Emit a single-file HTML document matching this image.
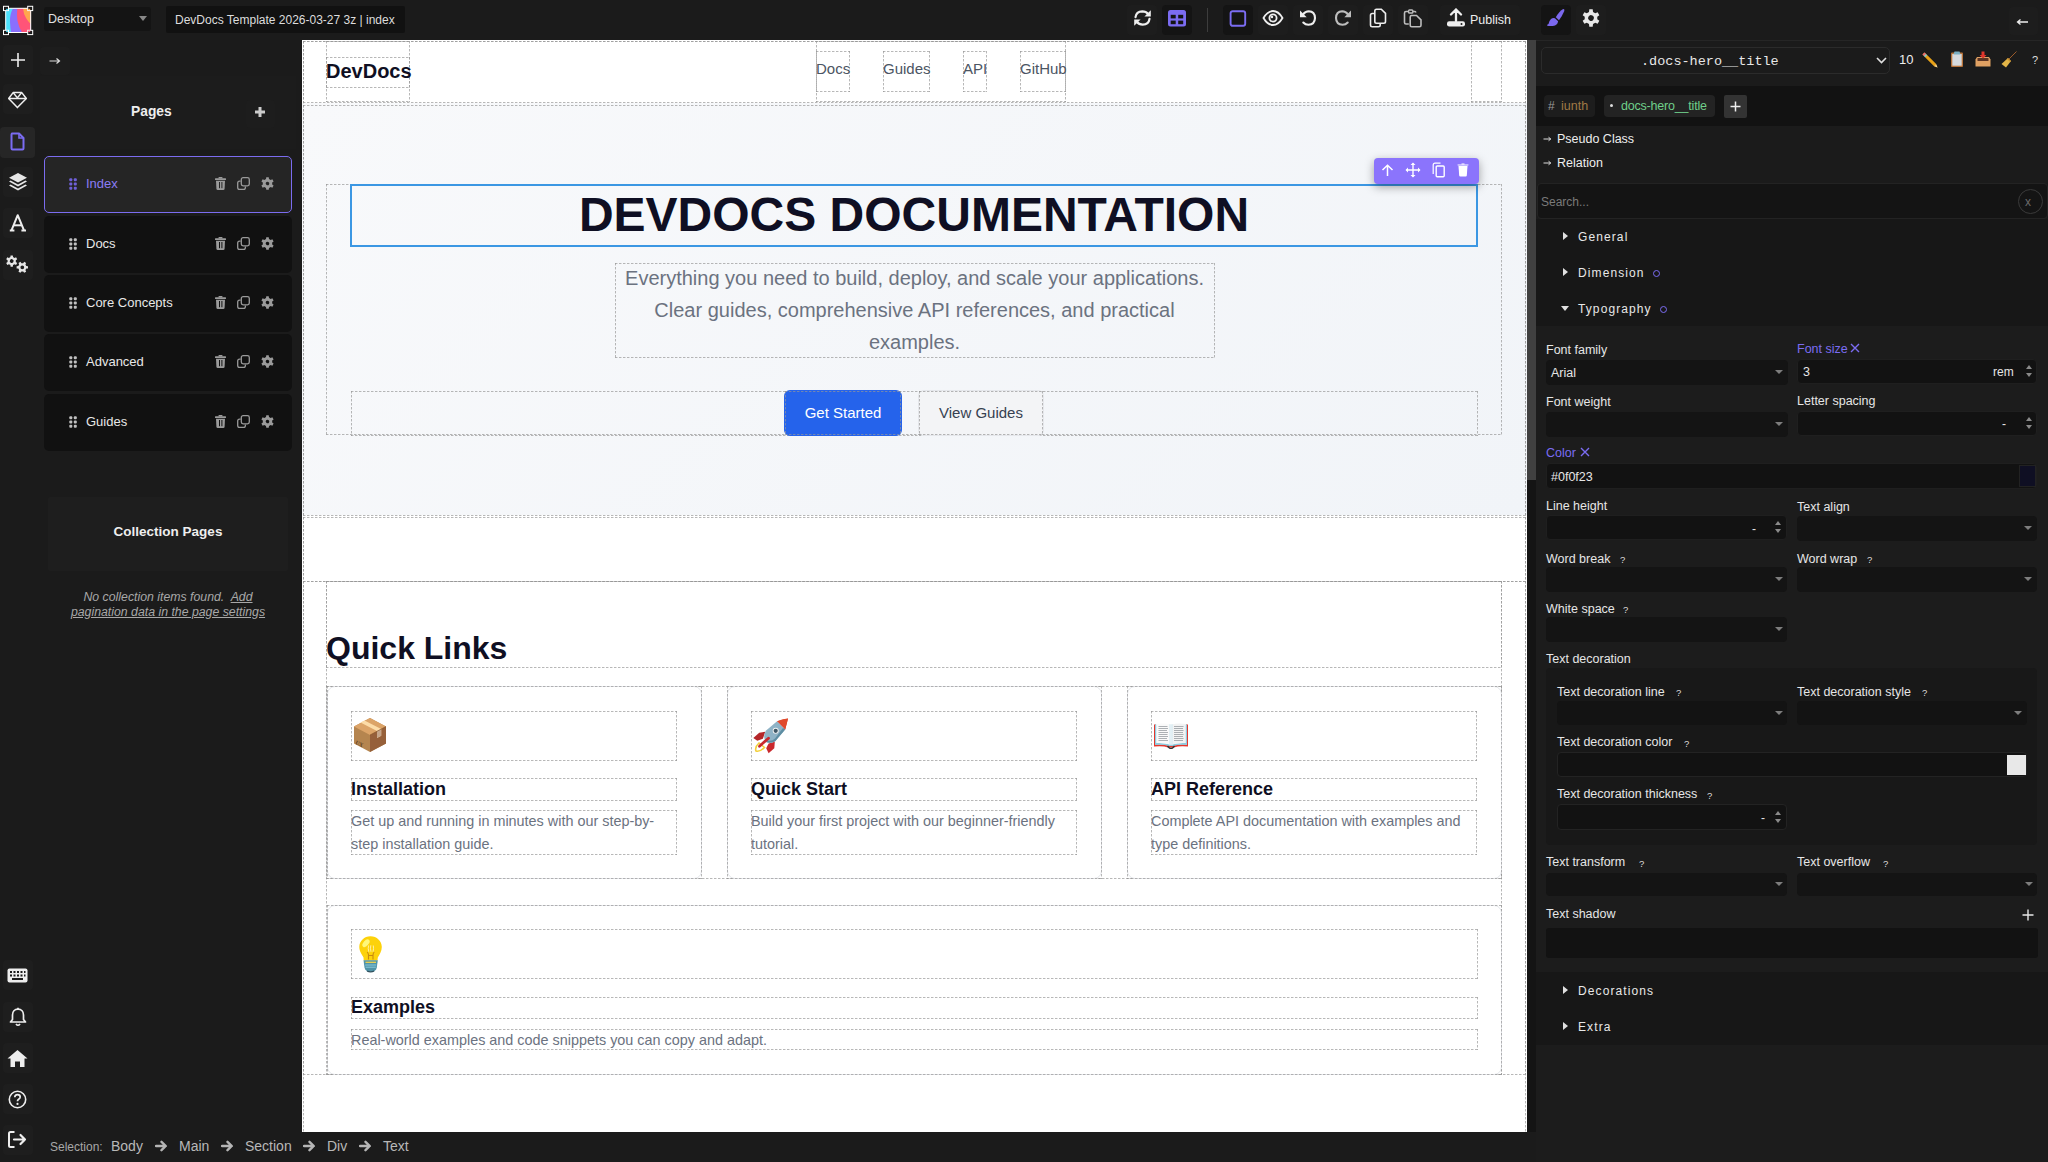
<!DOCTYPE html>
<html><head><meta charset="utf-8">
<style>
*{box-sizing:border-box;margin:0;padding:0}
html,body{width:2048px;height:1162px;overflow:hidden;background:#1b1b1b;font-family:"Liberation Sans",sans-serif;color:#e6e6e6}
.a{position:absolute}
svg{display:block}
/* top bar */
#top{position:absolute;left:0;top:0;width:2048px;height:40px;background:#1b1b1b}
.tbtn{position:absolute;top:5px;width:30px;height:30px;border-radius:4px;background:#1e1e1e}
/* canvas */
#canvas{position:absolute;left:302px;top:40px;width:1225px;height:1092px;background:#fff;overflow:hidden;font-family:"Liberation Sans",sans-serif}
.t{position:absolute;white-space:nowrap}
.emo{position:absolute}
.d{position:absolute;--c:rgba(150,150,150,.68);--h:rgba(150,150,150,.3);
background-image:linear-gradient(90deg,var(--c) 2px,var(--h) 2px,var(--h) 3px,transparent 3px),linear-gradient(90deg,var(--c) 2px,var(--h) 2px,var(--h) 3px,transparent 3px),linear-gradient(180deg,var(--c) 2px,var(--h) 2px,var(--h) 3px,transparent 3px),linear-gradient(180deg,var(--c) 2px,var(--h) 2px,var(--h) 3px,transparent 3px);
background-size:4px 1px,4px 1px,1px 4px,1px 4px;background-position:0 0,0 100%,0 0,100% 0;background-repeat:repeat-x,repeat-x,repeat-y,repeat-y}
/* status */
#status{position:absolute;left:36px;top:1132px;width:1500px;height:30px;background:#1b1b1b}
</style></head>
<body>
<div id="top">
  <!-- logo -->
  <div class="a" style="left:0;top:0;width:40px;height:40px">
    <svg width="40" height="40" viewBox="0 0 40 40">
      <rect x="5.7" y="8.3" width="25" height="24.2" fill="#4de0fb"/>
      <path d="M13 8.3Q9.5 15 10 22Q10.3 28 11 32.5H30.7V8.3Z" fill="#8a6ffd"/>
      <path d="M17.3 8.3Q16.5 15 17.5 21Q19 28 22 32.5H30.7V8.3Z" fill="#ff5478"/>
      <path d="M23 8.3Q23.5 14 26 18Q28 21.5 30.7 24V8.3Z" fill="#ffa64d"/>
      <rect x="5.7" y="8.3" width="25" height="24.2" fill="none" stroke="#fff" stroke-width="1"/>
      <g fill="#1b1b1b" stroke="#fff" stroke-width="1"><rect x="3.5" y="6.3" width="5" height="4.3"/><rect x="27.7" y="6.3" width="5" height="4.3"/><rect x="3.5" y="30.3" width="5" height="4.3"/><rect x="27.7" y="30.3" width="5" height="4.3"/></g>
      <g fill="#4de0fb"><rect x="6.2" y="8.8" width="1.8" height="1.3"/><rect x="6.2" y="30.8" width="1.8" height="1.3"/></g>
      <g fill="#ffa64d"><rect x="28.2" y="8.8" width="2" height="1.3"/></g><g fill="#ff5478"><rect x="28.2" y="30.8" width="2" height="1.3"/></g>
    </svg>
  </div>
  <div class="a" style="left:44px;top:7px;width:107px;height:24px;background:#141414;border-radius:3px"></div>
  <div class="a" style="left:48px;top:12px;font-size:12.5px;color:#e0e0e0">Desktop</div>
  <div class="a" style="left:139px;top:16px;width:0;height:0;border-left:4px solid transparent;border-right:4px solid transparent;border-top:5px solid #888"></div>
  <div class="a" style="left:166px;top:6px;width:239px;height:27px;background:#111;border-radius:2px"></div>
  <div class="a" style="left:175px;top:13px;font-size:12px;color:#ddd">DevDocs Template 2026-03-27 3z | index</div>

  <div class="a" style="left:1127px;top:5px;width:30px;height:30px;background:#1d1d1d;border-radius:4px"></div>
  <svg class="a" style="left:1133px;top:9px" width="19" height="18" viewBox="0 0 19 18"><g fill="none" stroke="#eee" stroke-width="2.2" stroke-linecap="round"><path d="M2.5 8.2Q3.2 2.5 9.3 2.3Q13 2.3 15.3 5.2"/><path d="M16.5 9.8Q15.8 15.5 9.7 15.7Q6 15.7 3.7 12.8"/></g><path d="M17.8 1.2V7.6H11.4Z" fill="#eee"/><path d="M1.2 16.8V10.4H7.6Z" fill="#eee"/></svg>
  <div class="a" style="left:1162px;top:5px;width:30px;height:30px;background:#141414;border-radius:4px"></div>
  <svg class="a" style="left:1168px;top:10px" width="18" height="17" viewBox="0 0 18 17"><rect x="0" y="0" width="18" height="16.5" rx="2.5" fill="#7b6cf2"/><g fill="#141414"><rect x="2.7" y="4.8" width="5" height="3.6"/><rect x="10.2" y="4.8" width="5" height="3.6"/><rect x="2.7" y="10.6" width="5" height="3.6"/><rect x="10.2" y="10.6" width="5" height="3.6"/></g></svg>
  <div class="a" style="left:1207px;top:8px;width:1px;height:24px;background:#3d3d3d"></div>
  <div class="a" style="left:1223px;top:5px;width:30px;height:30px;background:#141414;border-radius:4px"></div>
  <svg class="a" style="left:1229px;top:10px" width="18" height="17" viewBox="0 0 18 17"><rect x="1.6" y="1.2" width="14.6" height="14.6" rx="2" fill="none" stroke="#7b6cf2" stroke-width="1.9"/></svg>
  <div class="a" style="left:1258px;top:5px;width:30px;height:30px;background:#1d1d1d;border-radius:4px"></div>
  <svg class="a" style="left:1262px;top:9px" width="22" height="18" viewBox="0 0 22 18"><path d="M1.5 9Q5.5 2 11 2Q16.5 2 20.5 9Q16.5 16 11 16Q5.5 16 1.5 9Z" fill="none" stroke="#eee" stroke-width="1.8"/><circle cx="11" cy="9" r="3.6" fill="none" stroke="#eee" stroke-width="1.8"/><circle cx="10" cy="8" r="1.2" fill="#eee"/></svg>
  <div class="a" style="left:1293px;top:5px;width:30px;height:30px;background:#1d1d1d;border-radius:4px"></div>
  <svg class="a" style="left:1299px;top:9px" width="18" height="18" viewBox="0 0 18 18"><path d="M4 5.5Q6.2 2.3 9.8 2.3Q15.8 2.5 16 9Q15.8 15.5 9.5 15.7Q6.3 15.7 4.3 13.5" fill="none" stroke="#eee" stroke-width="2.1" stroke-linecap="round"/><path d="M1 1.5V8.2H7.7Z" fill="#eee"/></svg>
  <div class="a" style="left:1328px;top:5px;width:30px;height:30px;background:#1d1d1d;border-radius:4px"></div>
  <svg class="a" style="left:1334px;top:9px" width="18" height="18" viewBox="0 0 18 18"><path d="M14 5.5Q11.8 2.3 8.2 2.3Q2.2 2.5 2 9Q2.2 15.5 8.5 15.7Q11.7 15.7 13.7 13.5" fill="none" stroke="#bdbdbd" stroke-width="2.1" stroke-linecap="round"/><path d="M17 1.5V8.2H10.3Z" fill="#bdbdbd"/></svg>
  <div class="a" style="left:1363px;top:5px;width:30px;height:30px;background:#1d1d1d;border-radius:4px"></div>
  <svg class="a" style="left:1369px;top:8px" width="18" height="20" viewBox="0 0 18 20"><path d="M7.5 1.2H12.3L16.5 5.4V13.5Q16.5 15.2 14.8 15.2H7.5Q5.8 15.2 5.8 13.5V2.9Q5.8 1.2 7.5 1.2Z" fill="none" stroke="#eee" stroke-width="1.6"/><path d="M5.8 5.5H3.2Q1.5 5.5 1.5 7.2V17.2Q1.5 18.8 3.2 18.8H9.5Q11.2 18.8 11.2 17.2V15.2" fill="none" stroke="#eee" stroke-width="1.6"/></svg>
  <div class="a" style="left:1398px;top:5px;width:30px;height:30px;background:#1d1d1d;border-radius:4px"></div>
  <svg class="a" style="left:1403px;top:8px" width="20" height="20" viewBox="0 0 20 20"><path d="M5.2 3.5H3Q1.5 3.5 1.5 5V14.5Q1.5 16 3 16H5.8" fill="none" stroke="#bdbdbd" stroke-width="1.6"/><path d="M9.5 3.5H11.5Q12.5 3.5 13 4.5" fill="none" stroke="#bdbdbd" stroke-width="1.6"/><rect x="5.6" y="2" width="4.2" height="3" rx=".8" fill="none" stroke="#bdbdbd" stroke-width="1.4"/><path d="M8 7.5H13.5L18 11.8V17.3Q18 18.8 16.5 18.8H8.7Q7.2 18.8 7.2 17.3V9Q7.2 7.5 8.7 7.5Z" fill="none" stroke="#bdbdbd" stroke-width="1.6"/></svg>
  <div class="a" style="left:1440px;top:5px;width:80px;height:30px;background:#1d1d1d;border-radius:4px"></div>
  <svg class="a" style="left:1446px;top:8px" width="20" height="20" viewBox="0 0 20 20"><path d="M10 1.5L15 6.5M10 1.5L5 6.5M10 1.5V13" fill="none" stroke="#eee" stroke-width="2.3" stroke-linecap="round"/><rect x="1" y="13.3" width="18" height="5.2" rx="2.2" fill="#eee"/><circle cx="15.5" cy="15.9" r="1" fill="#1b1b1b"/></svg>
  <div class="a" style="left:1470px;top:13px;font-size:12.5px;color:#eee;letter-spacing:0px">Publish</div>

  <div class="a" style="left:1541px;top:5px;width:30px;height:30px;background:#141414;border-radius:4px"></div>
  <svg class="a" style="left:1546px;top:8px" width="20" height="20" viewBox="0 0 20 20"><path d="M16.8 1.2Q18.8 0.6 18.3 3Q16 8.5 13 12.3L9.8 9.3Q13 3.5 16.8 1.2Z" fill="#7b68ee"/><path d="M8.9 10.2L12.1 13.2Q11.5 17.5 7 17.9Q3.5 18.2 1.2 17.8Q0.6 16.6 2.5 16Q3.3 12.5 5 11Q6.8 9.6 8.9 10.2Z" fill="#7b68ee"/></svg>
  <div class="a" style="left:1576px;top:5px;width:30px;height:30px;background:#1d1d1d;border-radius:4px"></div>
  <svg class="a" style="left:1582px;top:9px" width="18" height="18" viewBox="0 0 18 18"><path d="M15.08 6.99L17.64 7.31L17.64 10.69L15.08 11.01L13.78 13.26L14.78 15.63L11.85 17.33L10.30 15.27L7.70 15.27L6.15 17.33L3.22 15.63L4.22 13.26L2.92 11.01L0.36 10.69L0.36 7.31L2.92 6.99L4.22 4.74L3.22 2.37L6.15 0.67L7.70 2.73L10.30 2.73L11.85 0.67L14.78 2.37L13.78 4.74ZM11.80 9.00A2.8 2.8 0 1 0 6.20 9.00A2.8 2.8 0 1 0 11.80 9.00Z" fill="#e8e8e8" fill-rule="evenodd" transform="rotate(30 9 9)"/></svg>
  <div class="a" style="left:2009px;top:7px;width:29px;height:28px;background:#1d1d1d;border-radius:4px"></div>
  <svg class="a" style="left:2016px;top:18px" width="13" height="8" viewBox="0 0 13 8"><path d="M12 4H2M4.5 1.5L1.5 4L4.5 6.5" fill="none" stroke="#eee" stroke-width="1.3"/></svg>
  <div class="a" style="left:1536px;top:40px;width:512px;height:1px;background:#262626"></div>
</div>


<div id="lside">
  <div class="tbtn" style="left:3px;top:45px"></div>
  <svg class="a" style="left:9px;top:51px" width="18" height="18" viewBox="0 0 18 18"><path d="M9 2V16M2 9H16" stroke="#eee" stroke-width="1.6"/></svg>
  <div class="tbtn" style="left:3px;top:84px"></div>
  <svg class="a" style="left:8px;top:91px" width="20" height="18" viewBox="0 0 20 18"><g fill="none" stroke="#eee" stroke-width="1.5" stroke-linejoin="round"><path d="M5.1 1.6H13.8L18.3 7.5L9.4 16.6L0.7 7.5Z"/><path d="M0.7 7.5H18.3"/><path d="M5.3 1.8L9.4 6.9L13.5 1.8"/></g></svg>
  <div class="a" style="left:0;top:127px;width:35px;height:31px;background:#262626;border-radius:4px"></div>
  <svg class="a" style="left:10px;top:132px" width="15" height="19" viewBox="0 0 15 19"><path d="M2 1.5H9L13.5 6V16.5Q13.5 17.5 12.5 17.5H2.5Q1.5 17.5 1.5 16.5V2.5Q1.5 1.5 2.5 1.5Z" fill="none" stroke="#7b6cf2" stroke-width="2" stroke-linejoin="round"/><path d="M9 1.5V6H13.5" fill="none" stroke="#7b6cf2" stroke-width="1.6"/></svg>
  <div class="tbtn" style="left:3px;top:167px"></div>
  <svg class="a" style="left:8px;top:172px" width="20" height="20" viewBox="0 0 20 20"><g fill="#e6e6e6"><path d="M10 1L19 5.8L10 10.6L1 5.8Z"/><path d="M2.6 8.6L10 12.6L17.4 8.6L19 9.6L10 14.5L1 9.6Z"/><path d="M2.6 12.5L10 16.5L17.4 12.5L19 13.5L10 18.4L1 13.5Z"/></g></svg>
  <div class="tbtn" style="left:3px;top:208px"></div>
  <svg class="a" style="left:8px;top:213px" width="20" height="20" viewBox="0 0 20 20"><g fill="none" stroke="#eee" stroke-width="2" stroke-linejoin="round"><path d="M3.6 17.2L9.7 2.2L15.9 17.2"/><path d="M5.7 12.3H13.8"/><path d="M1.8 17.5H6.4M13.4 17.5H18"/></g></svg>
  <div class="tbtn" style="left:3px;top:250px"></div>
  <svg class="a" style="left:5px;top:255px" width="26" height="20" viewBox="0 0 26 20"><path d="M10.19 4.88L11.89 5.08L11.89 7.32L10.19 7.52L9.34 8.99L10.01 10.57L8.08 11.69L7.05 10.31L5.35 10.31L4.32 11.69L2.39 10.57L3.06 8.99L2.21 7.52L0.51 7.32L0.51 5.08L2.21 4.88L3.06 3.41L2.39 1.83L4.32 0.71L5.35 2.09L7.05 2.09L8.08 0.71L10.01 1.83L9.34 3.41ZM8.10 6.20A1.9 1.9 0 1 0 4.30 6.20A1.9 1.9 0 1 0 8.10 6.20Z" fill="#e6e6e6" fill-rule="evenodd" transform="translate(0.5 -0.1) rotate(30 6.2 6.2)"/><path d="M10.19 4.88L11.89 5.08L11.89 7.32L10.19 7.52L9.34 8.99L10.01 10.57L8.08 11.69L7.05 10.31L5.35 10.31L4.32 11.69L2.39 10.57L3.06 8.99L2.21 7.52L0.51 7.32L0.51 5.08L2.21 4.88L3.06 3.41L2.39 1.83L4.32 0.71L5.35 2.09L7.05 2.09L8.08 0.71L10.01 1.83L9.34 3.41ZM8.10 6.20A1.9 1.9 0 1 0 4.30 6.20A1.9 1.9 0 1 0 8.10 6.20Z" fill="#e6e6e6" fill-rule="evenodd" transform="translate(11.1 6.1) rotate(0 6.2 6.2)"/></svg>

  <div class="tbtn" style="left:3px;top:960px"></div>
  <svg class="a" style="left:7px;top:968px" width="21" height="15" viewBox="0 0 21 15"><rect x="0.5" y="0.5" width="20" height="14" rx="2" fill="#eee"/><g fill="#1b1b1b"><rect x="3" y="3" width="2" height="2"/><rect x="6.5" y="3" width="2" height="2"/><rect x="10" y="3" width="2" height="2"/><rect x="13.5" y="3" width="2" height="2"/><rect x="17" y="3" width="1.5" height="2"/><rect x="3" y="6.5" width="2" height="2"/><rect x="6.5" y="6.5" width="2" height="2"/><rect x="10" y="6.5" width="2" height="2"/><rect x="13.5" y="6.5" width="2" height="2"/><rect x="17" y="6.5" width="1.5" height="2"/><rect x="5" y="10" width="11" height="2"/></g></svg>
  <div class="tbtn" style="left:3px;top:1002px"></div>
  <svg class="a" style="left:9px;top:1007px" width="18" height="20" viewBox="0 0 18 20"><path d="M9 2.2C5.6 2.2 3.5 4.8 3.5 8V12.5L1.5 15H16.5L14.5 12.5V8C14.5 4.8 12.4 2.2 9 2.2Z" fill="none" stroke="#eee" stroke-width="1.7" stroke-linejoin="round"/><path d="M9 0.8V2.4" stroke="#eee" stroke-width="1.6"/><path d="M7 17Q9 19.5 11 17" fill="none" stroke="#eee" stroke-width="1.7"/></svg>
  <div class="tbtn" style="left:3px;top:1043px"></div>
  <svg class="a" style="left:7px;top:1049px" width="21" height="19" viewBox="0 0 21 19"><path d="M10.5 1L20.5 9.5H17.5V18H13V12.5H8V18H3.5V9.5H0.5Z" fill="#eee"/></svg>
  <div class="tbtn" style="left:3px;top:1084px"></div>
  <svg class="a" style="left:8px;top:1090px" width="19" height="19" viewBox="0 0 19 19"><circle cx="9.5" cy="9.5" r="8.2" fill="none" stroke="#eee" stroke-width="1.6"/><path d="M6.8 7.3Q6.8 4.6 9.5 4.6Q12.2 4.6 12.2 7Q12.2 8.6 10.4 9.4Q9.5 9.9 9.5 11.2" fill="none" stroke="#eee" stroke-width="1.7"/><circle cx="9.5" cy="13.9" r="1.1" fill="#eee"/></svg>
  <div class="tbtn" style="left:3px;top:1125px"></div>
  <svg class="a" style="left:7px;top:1130px" width="21" height="19" viewBox="0 0 21 19"><path d="M7.5 2H3.5Q2 2 2 3.5V15.5Q2 17 3.5 17H7.5" fill="none" stroke="#eee" stroke-width="2"/><path d="M7 9.5H18M13.5 5L18 9.5L13.5 14" fill="none" stroke="#eee" stroke-width="2.2" stroke-linecap="round" stroke-linejoin="round"/></svg>
</div>

<div id="pages">
  <div class="a" style="left:40px;top:47px;width:30px;height:28px;background:#1d1d1d;border-radius:4px"></div>
  <svg class="a" style="left:49px;top:57px" width="12" height="8" viewBox="0 0 12 8"><path d="M0.5 4H10M7.5 1.5L10.5 4L7.5 6.5" fill="none" stroke="#ddd" stroke-width="1.2"/></svg>
  <div class="a" style="left:40px;top:76px;width:256px;height:73px;background:#1c1c1c"></div>
  <div class="a" style="left:131px;top:104px;font-size:13.8px;font-weight:bold;color:#eee">Pages</div>
  <div class="a" style="left:246px;top:100px;width:29px;height:28px;border-radius:4px;background:#1d1d1d"></div>
  <svg class="a" style="left:254px;top:106px" width="12" height="12" viewBox="0 0 12 12"><path d="M6 1V11M1 6H11" stroke="#ccc" stroke-width="3"/></svg>

  <div class="a" style="left:44px;top:156px;width:248px;height:57px;background:#252525;border-radius:5px;border:1.5px solid #7b6cf0;"></div>
  <svg class="a" style="left:69px;top:178px" width="8" height="12" viewBox="0 0 8 12"><g fill="#6f60d8"><rect x="0.3" y="0.2" width="3" height="3" rx="1"/><rect x="4.8" y="0.2" width="3" height="3" rx="1"/><rect x="0.3" y="4.5" width="3" height="3" rx="1"/><rect x="4.8" y="4.5" width="3" height="3" rx="1"/><rect x="0.3" y="8.8" width="3" height="3" rx="1"/><rect x="4.8" y="8.8" width="3" height="3" rx="1"/></g></svg>
  <div class="a" style="left:86px;top:176px;font-size:13px;color:#8a7cf5;white-space:nowrap">Index</div>
  <svg class="a" style="left:215px;top:177px" width="11" height="13" viewBox="0 0 11 13"><g fill="#9a9a9a"><rect x="0" y="1.2" width="11" height="1.8" rx=".5"/><rect x="3.5" y="0" width="4" height="1.6" rx=".6"/><path d="M1 3.8H10L9.6 11.8Q9.5 13 8.3 13H2.7Q1.5 13 1.4 11.8Z"/></g><g fill="#252525"><rect x="4" y="5" width="1" height="6.2"/><rect x="6.4" y="5" width="1" height="6.2"/></g></svg>
  <svg class="a" style="left:237px;top:177px" width="13" height="13" viewBox="0 0 13 13"><g fill="none" stroke="#9a9a9a" stroke-width="1.3"><rect x="4.3" y="0.7" width="8" height="8.2" rx="1.8"/><path d="M3.6 4.2H2.5Q0.7 4.2 0.7 6V10.4Q0.7 12.3 2.5 12.3H6.5Q8.4 12.3 8.4 10.4V9.5"/></g></svg>
  <svg class="a" style="left:261px;top:177px" width="13" height="13" viewBox="0 0 12.5 12.5"><path d="M10.62 4.81L12.33 5.06L12.33 7.44L10.62 7.69L9.68 9.31L10.33 10.92L8.26 12.12L7.18 10.75L5.32 10.75L4.24 12.12L2.17 10.92L2.82 9.31L1.88 7.69L0.17 7.44L0.17 5.06L1.88 4.81L2.82 3.19L2.17 1.58L4.24 0.38L5.32 1.75L7.18 1.75L8.26 0.38L10.33 1.58L9.68 3.19ZM7.95 6.25A1.7 1.7 0 1 0 4.55 6.25A1.7 1.7 0 1 0 7.95 6.25Z" fill="#9a9a9a" fill-rule="evenodd" transform="rotate(30 6.25 6.25)"/></svg>
  <div class="a" style="left:44px;top:216px;width:248px;height:57px;background:#111111;border-radius:5px;"></div>
  <svg class="a" style="left:69px;top:238px" width="8" height="12" viewBox="0 0 8 12"><g fill="#c0c0c0"><rect x="0.3" y="0.2" width="3" height="3" rx="1"/><rect x="4.8" y="0.2" width="3" height="3" rx="1"/><rect x="0.3" y="4.5" width="3" height="3" rx="1"/><rect x="4.8" y="4.5" width="3" height="3" rx="1"/><rect x="0.3" y="8.8" width="3" height="3" rx="1"/><rect x="4.8" y="8.8" width="3" height="3" rx="1"/></g></svg>
  <div class="a" style="left:86px;top:236px;font-size:13px;color:#e8e8e8;white-space:nowrap">Docs</div>
  <svg class="a" style="left:215px;top:237px" width="11" height="13" viewBox="0 0 11 13"><g fill="#9a9a9a"><rect x="0" y="1.2" width="11" height="1.8" rx=".5"/><rect x="3.5" y="0" width="4" height="1.6" rx=".6"/><path d="M1 3.8H10L9.6 11.8Q9.5 13 8.3 13H2.7Q1.5 13 1.4 11.8Z"/></g><g fill="#111111"><rect x="4" y="5" width="1" height="6.2"/><rect x="6.4" y="5" width="1" height="6.2"/></g></svg>
  <svg class="a" style="left:237px;top:237px" width="13" height="13" viewBox="0 0 13 13"><g fill="none" stroke="#9a9a9a" stroke-width="1.3"><rect x="4.3" y="0.7" width="8" height="8.2" rx="1.8"/><path d="M3.6 4.2H2.5Q0.7 4.2 0.7 6V10.4Q0.7 12.3 2.5 12.3H6.5Q8.4 12.3 8.4 10.4V9.5"/></g></svg>
  <svg class="a" style="left:261px;top:237px" width="13" height="13" viewBox="0 0 12.5 12.5"><path d="M10.62 4.81L12.33 5.06L12.33 7.44L10.62 7.69L9.68 9.31L10.33 10.92L8.26 12.12L7.18 10.75L5.32 10.75L4.24 12.12L2.17 10.92L2.82 9.31L1.88 7.69L0.17 7.44L0.17 5.06L1.88 4.81L2.82 3.19L2.17 1.58L4.24 0.38L5.32 1.75L7.18 1.75L8.26 0.38L10.33 1.58L9.68 3.19ZM7.95 6.25A1.7 1.7 0 1 0 4.55 6.25A1.7 1.7 0 1 0 7.95 6.25Z" fill="#9a9a9a" fill-rule="evenodd" transform="rotate(30 6.25 6.25)"/></svg>
  <div class="a" style="left:44px;top:275px;width:248px;height:57px;background:#111111;border-radius:5px;"></div>
  <svg class="a" style="left:69px;top:297px" width="8" height="12" viewBox="0 0 8 12"><g fill="#c0c0c0"><rect x="0.3" y="0.2" width="3" height="3" rx="1"/><rect x="4.8" y="0.2" width="3" height="3" rx="1"/><rect x="0.3" y="4.5" width="3" height="3" rx="1"/><rect x="4.8" y="4.5" width="3" height="3" rx="1"/><rect x="0.3" y="8.8" width="3" height="3" rx="1"/><rect x="4.8" y="8.8" width="3" height="3" rx="1"/></g></svg>
  <div class="a" style="left:86px;top:295px;font-size:13px;color:#e8e8e8;white-space:nowrap">Core Concepts</div>
  <svg class="a" style="left:215px;top:296px" width="11" height="13" viewBox="0 0 11 13"><g fill="#9a9a9a"><rect x="0" y="1.2" width="11" height="1.8" rx=".5"/><rect x="3.5" y="0" width="4" height="1.6" rx=".6"/><path d="M1 3.8H10L9.6 11.8Q9.5 13 8.3 13H2.7Q1.5 13 1.4 11.8Z"/></g><g fill="#111111"><rect x="4" y="5" width="1" height="6.2"/><rect x="6.4" y="5" width="1" height="6.2"/></g></svg>
  <svg class="a" style="left:237px;top:296px" width="13" height="13" viewBox="0 0 13 13"><g fill="none" stroke="#9a9a9a" stroke-width="1.3"><rect x="4.3" y="0.7" width="8" height="8.2" rx="1.8"/><path d="M3.6 4.2H2.5Q0.7 4.2 0.7 6V10.4Q0.7 12.3 2.5 12.3H6.5Q8.4 12.3 8.4 10.4V9.5"/></g></svg>
  <svg class="a" style="left:261px;top:296px" width="13" height="13" viewBox="0 0 12.5 12.5"><path d="M10.62 4.81L12.33 5.06L12.33 7.44L10.62 7.69L9.68 9.31L10.33 10.92L8.26 12.12L7.18 10.75L5.32 10.75L4.24 12.12L2.17 10.92L2.82 9.31L1.88 7.69L0.17 7.44L0.17 5.06L1.88 4.81L2.82 3.19L2.17 1.58L4.24 0.38L5.32 1.75L7.18 1.75L8.26 0.38L10.33 1.58L9.68 3.19ZM7.95 6.25A1.7 1.7 0 1 0 4.55 6.25A1.7 1.7 0 1 0 7.95 6.25Z" fill="#9a9a9a" fill-rule="evenodd" transform="rotate(30 6.25 6.25)"/></svg>
  <div class="a" style="left:44px;top:334px;width:248px;height:57px;background:#111111;border-radius:5px;"></div>
  <svg class="a" style="left:69px;top:356px" width="8" height="12" viewBox="0 0 8 12"><g fill="#c0c0c0"><rect x="0.3" y="0.2" width="3" height="3" rx="1"/><rect x="4.8" y="0.2" width="3" height="3" rx="1"/><rect x="0.3" y="4.5" width="3" height="3" rx="1"/><rect x="4.8" y="4.5" width="3" height="3" rx="1"/><rect x="0.3" y="8.8" width="3" height="3" rx="1"/><rect x="4.8" y="8.8" width="3" height="3" rx="1"/></g></svg>
  <div class="a" style="left:86px;top:354px;font-size:13px;color:#e8e8e8;white-space:nowrap">Advanced</div>
  <svg class="a" style="left:215px;top:355px" width="11" height="13" viewBox="0 0 11 13"><g fill="#9a9a9a"><rect x="0" y="1.2" width="11" height="1.8" rx=".5"/><rect x="3.5" y="0" width="4" height="1.6" rx=".6"/><path d="M1 3.8H10L9.6 11.8Q9.5 13 8.3 13H2.7Q1.5 13 1.4 11.8Z"/></g><g fill="#111111"><rect x="4" y="5" width="1" height="6.2"/><rect x="6.4" y="5" width="1" height="6.2"/></g></svg>
  <svg class="a" style="left:237px;top:355px" width="13" height="13" viewBox="0 0 13 13"><g fill="none" stroke="#9a9a9a" stroke-width="1.3"><rect x="4.3" y="0.7" width="8" height="8.2" rx="1.8"/><path d="M3.6 4.2H2.5Q0.7 4.2 0.7 6V10.4Q0.7 12.3 2.5 12.3H6.5Q8.4 12.3 8.4 10.4V9.5"/></g></svg>
  <svg class="a" style="left:261px;top:355px" width="13" height="13" viewBox="0 0 12.5 12.5"><path d="M10.62 4.81L12.33 5.06L12.33 7.44L10.62 7.69L9.68 9.31L10.33 10.92L8.26 12.12L7.18 10.75L5.32 10.75L4.24 12.12L2.17 10.92L2.82 9.31L1.88 7.69L0.17 7.44L0.17 5.06L1.88 4.81L2.82 3.19L2.17 1.58L4.24 0.38L5.32 1.75L7.18 1.75L8.26 0.38L10.33 1.58L9.68 3.19ZM7.95 6.25A1.7 1.7 0 1 0 4.55 6.25A1.7 1.7 0 1 0 7.95 6.25Z" fill="#9a9a9a" fill-rule="evenodd" transform="rotate(30 6.25 6.25)"/></svg>
  <div class="a" style="left:44px;top:394px;width:248px;height:57px;background:#111111;border-radius:5px;"></div>
  <svg class="a" style="left:69px;top:416px" width="8" height="12" viewBox="0 0 8 12"><g fill="#c0c0c0"><rect x="0.3" y="0.2" width="3" height="3" rx="1"/><rect x="4.8" y="0.2" width="3" height="3" rx="1"/><rect x="0.3" y="4.5" width="3" height="3" rx="1"/><rect x="4.8" y="4.5" width="3" height="3" rx="1"/><rect x="0.3" y="8.8" width="3" height="3" rx="1"/><rect x="4.8" y="8.8" width="3" height="3" rx="1"/></g></svg>
  <div class="a" style="left:86px;top:414px;font-size:13px;color:#e8e8e8;white-space:nowrap">Guides</div>
  <svg class="a" style="left:215px;top:415px" width="11" height="13" viewBox="0 0 11 13"><g fill="#9a9a9a"><rect x="0" y="1.2" width="11" height="1.8" rx=".5"/><rect x="3.5" y="0" width="4" height="1.6" rx=".6"/><path d="M1 3.8H10L9.6 11.8Q9.5 13 8.3 13H2.7Q1.5 13 1.4 11.8Z"/></g><g fill="#111111"><rect x="4" y="5" width="1" height="6.2"/><rect x="6.4" y="5" width="1" height="6.2"/></g></svg>
  <svg class="a" style="left:237px;top:415px" width="13" height="13" viewBox="0 0 13 13"><g fill="none" stroke="#9a9a9a" stroke-width="1.3"><rect x="4.3" y="0.7" width="8" height="8.2" rx="1.8"/><path d="M3.6 4.2H2.5Q0.7 4.2 0.7 6V10.4Q0.7 12.3 2.5 12.3H6.5Q8.4 12.3 8.4 10.4V9.5"/></g></svg>
  <svg class="a" style="left:261px;top:415px" width="13" height="13" viewBox="0 0 12.5 12.5"><path d="M10.62 4.81L12.33 5.06L12.33 7.44L10.62 7.69L9.68 9.31L10.33 10.92L8.26 12.12L7.18 10.75L5.32 10.75L4.24 12.12L2.17 10.92L2.82 9.31L1.88 7.69L0.17 7.44L0.17 5.06L1.88 4.81L2.82 3.19L2.17 1.58L4.24 0.38L5.32 1.75L7.18 1.75L8.26 0.38L10.33 1.58L9.68 3.19ZM7.95 6.25A1.7 1.7 0 1 0 4.55 6.25A1.7 1.7 0 1 0 7.95 6.25Z" fill="#9a9a9a" fill-rule="evenodd" transform="rotate(30 6.25 6.25)"/></svg>
  <div class="a" style="left:48px;top:497px;width:240px;height:74px;background:#1e1e1e;border-radius:2px"></div>
  <div class="a" style="left:48px;top:524px;width:240px;text-align:center;font-size:13.5px;font-weight:bold;color:#eee">Collection Pages</div>
  <div class="a" style="left:44px;top:590px;width:248px;text-align:center;font-size:12.3px;font-style:italic;color:#a8a8a8;line-height:14.6px">No collection items found.&nbsp; <u>Add</u><br><u>pagination data in the page settings</u></div>
</div>


<div id="canvas">
<div style="position:absolute;left:0;top:0;width:1225px;height:63px;background:#fff"></div>
<div class="d" style="left:1px;top:1px;width:1223px;height:62px;"></div>
<div class="d" style="left:24px;top:1px;width:84px;height:61px;"></div>
<div class="d" style="left:24px;top:17px;width:84px;height:30.5px;"></div>
<div class="t" style="left:24.0px;top:19.2px;font-size:20px;line-height:25px;color:#0f0f23;font-weight:bold;text-align:left;">DevDocs</div>
<div class="d" style="left:514px;top:1px;width:250px;height:61px;"></div>
<div class="d" style="left:514px;top:11px;width:34px;height:41px;"></div>
<div class="t" style="left:514.0px;top:19.3px;font-size:15px;line-height:19px;color:#4b5563;font-weight:normal;text-align:left;">Docs</div>
<div class="d" style="left:581px;top:11px;width:47px;height:41px;"></div>
<div class="t" style="left:581.0px;top:19.3px;font-size:15px;line-height:19px;color:#4b5563;font-weight:normal;text-align:left;">Guides</div>
<div class="d" style="left:661px;top:11px;width:24px;height:41px;"></div>
<div class="t" style="left:661.0px;top:19.3px;font-size:15px;line-height:19px;color:#4b5563;font-weight:normal;text-align:left;">API</div>
<div class="d" style="left:718px;top:11px;width:46px;height:41px;"></div>
<div class="t" style="left:718.0px;top:19.3px;font-size:15px;line-height:19px;color:#4b5563;font-weight:normal;text-align:left;">GitHub</div>
<div class="d" style="left:1169px;top:1px;width:31px;height:61px;"></div>
<div style="position:absolute;left:0;top:63px;width:1225px;height:412px;background:linear-gradient(135deg,#f8f9fb 0%,#f1f4f8 100%)"></div>
<div class="d" style="left:1px;top:65px;width:1223px;height:410.5px;"></div>
<div class="d" style="left:1px;top:477px;width:1223px;height:65px;"></div>
<div class="d" style="left:24px;top:144px;width:1176px;height:251px;"></div>
<div style="position:absolute;left:48px;top:144px;width:1128px;height:63px;border:2px solid #3b97e3"></div>
<div class="t" style="left:62.0px;top:144.7px;width:1100px;font-size:48px;line-height:60px;color:#0f0f23;font-weight:bold;text-align:center;">DEVDOCS DOCUMENTATION</div>
<div class="d" style="left:313px;top:223px;width:600px;height:95px;"></div>
<div class="t" style="left:312.5px;top:225.7px;width:600px;font-size:20px;line-height:25px;color:#6b7280;font-weight:normal;text-align:center;">Everything you need to build, deploy, and scale your applications.</div>
<div class="t" style="left:312.5px;top:257.7px;width:600px;font-size:20px;line-height:25px;color:#6b7280;font-weight:normal;text-align:center;">Clear guides, comprehensive API references, and practical</div>
<div class="t" style="left:312.5px;top:289.7px;width:600px;font-size:20px;line-height:25px;color:#6b7280;font-weight:normal;text-align:center;">examples.</div>
<div class="d" style="left:49px;top:351px;width:1127px;height:45px;"></div>
<div style="position:absolute;left:482px;top:350px;width:118px;height:46px;background:#2563eb;border-radius:6px"></div>
<div class="d" style="left:483px;top:351px;width:116px;height:44px;"></div>
<div class="t" style="left:482.0px;top:363.3px;width:118px;font-size:15px;line-height:19px;color:#ffffff;font-weight:normal;text-align:center;">Get Started</div>
<div style="position:absolute;left:616px;top:350px;width:126px;height:46px;background:#f3f4f6;border:1px solid #e5e7eb;border-radius:6px"></div>
<div class="d" style="left:617px;top:351px;width:124px;height:44px;"></div>
<div class="t" style="left:616.0px;top:363.3px;width:126px;font-size:15px;line-height:19px;color:#374151;font-weight:normal;text-align:center;">View Guides</div>
<div style="position:absolute;left:1072px;top:118px;width:105px;height:26px;background:#8b74fc;border-radius:4px;box-shadow:0 3px 10px rgba(0,0,0,.35)">
<svg style="position:absolute;left:6px;top:5px" width="15" height="15" viewBox="0 0 15 15"><path d="M7.5 13V2.5M2.5 7L7.5 2.2L12.5 7" fill="none" stroke="#fff" stroke-width="1.5"/></svg>
<svg style="position:absolute;left:31px;top:4px" width="16" height="16" viewBox="0 0 16 16"><path d="M8 1.5V14.5M1.5 8H14.5" stroke="#fff" stroke-width="1.4"/><path d="M8 0.5L10.5 3H5.5ZM8 15.5L10.5 13H5.5ZM0.5 8L3 5.5V10.5ZM15.5 8L13 5.5V10.5Z" fill="#fff"/></svg>
<svg style="position:absolute;left:57px;top:4px" width="15" height="16" viewBox="0 0 15 16"><path d="M9.5 1.2H4Q2.2 1.2 2.2 3V12" fill="none" stroke="#fff" stroke-width="1.2"/><rect x="5.2" y="4" width="8" height="10.8" rx="1" fill="none" stroke="#fff" stroke-width="1.4"/></svg>
<svg style="position:absolute;left:83px;top:4px" width="12" height="16" viewBox="0 0 12 16"><path d="M0.5 2.5H11.5L11.3 3.5H0.7Z" fill="#fff"/><path d="M4.5 1.5H7.5V2.5H4.5Z" fill="#fff"/><path d="M1.5 4H10.5L9.8 13.5Q9.7 14.5 8.7 14.5H3.3Q2.3 14.5 2.2 13.5Z" fill="#fff"/></svg>
</div>
<div class="d" style="left:1px;top:541px;width:1223px;height:494px;"></div>
<div class="d" style="left:24px;top:541px;width:1176px;height:494px;"></div>
<div class="d" style="left:24px;top:541px;width:1176px;height:87px;"></div>
<div class="t" style="left:24.0px;top:588.4px;font-size:32px;line-height:40px;color:#0f0f23;font-weight:bold;text-align:left;">Quick Links</div>
<div class="d" style="left:24px;top:646px;width:1176px;height:193px;"></div>
<div style="position:absolute;left:25px;top:646px;width:375px;height:193px;border:1px solid #e5e7eb;border-radius:8px;background:#fff"></div>
<div class="d" style="left:25px;top:646px;width:375px;height:193px;"></div>
<div class="d" style="left:49px;top:671px;width:326px;height:50px;"></div>
<div class="emo" style="left:51px;top:677px"><svg width="34" height="36" viewBox="0 0 34 36"><path d="M17 1L33 9.5V26.5L17 35L1 26.5V9.5Z" fill="#b5854f"/><path d="M17 18L33 9.5V26.5L17 35Z" fill="#96603a"/><path d="M1 9.5L17 1L33 9.5L17 18Z" fill="#dca468"/><path d="M7.5 5.5L24 14L24 21L28.2 18.8V12L11.5 3.4Z" fill="#fcdca8"/><path d="M24 14L28.2 12V18.8L24 21Z" fill="#c5a58a"/><path d="M17 18L33 9.5" stroke="#7a4a24" stroke-width=".6"/><text x="2.5" y="28" font-size="5.5" font-weight="bold" fill="#5d3d20" font-family="Liberation Serif" transform="rotate(25 5 26)">UX</text></svg></div>
<div class="d" style="left:49px;top:738px;width:326px;height:23px;"></div>
<div class="t" style="left:49.0px;top:737.8px;font-size:18px;line-height:22px;color:#0f0f23;font-weight:bold;text-align:left;">Installation</div>
<div class="d" style="left:49px;top:770px;width:326px;height:45px;"></div>
<div class="t" style="left:49.0px;top:771.8px;font-size:14.4px;line-height:18px;color:#6b7280;font-weight:normal;text-align:left;">Get up and running in minutes with our step-by-</div>
<div class="t" style="left:49.0px;top:794.8px;font-size:14.4px;line-height:18px;color:#6b7280;font-weight:normal;text-align:left;">step installation guide.</div>
<div style="position:absolute;left:425px;top:646px;width:375px;height:193px;border:1px solid #e5e7eb;border-radius:8px;background:#fff"></div>
<div class="d" style="left:425px;top:646px;width:375px;height:193px;"></div>
<div class="d" style="left:449px;top:671px;width:326px;height:50px;"></div>
<div class="emo" style="left:451px;top:677.5px"><svg width="36" height="36" viewBox="0 0 36 36"><path d="M3 33Q1.5 29 6 25L11.5 29.5Q7 34 3 33Z" fill="none" stroke="#f3cf3a" stroke-width="1.6"/><path d="M0.3 19.9L6.2 14.7L12.3 13.7L9.9 20.8L4.3 22.7Z" fill="#b5272a"/><path d="M21.8 23.7L21.3 30.3L15.6 35.3L13.2 30.3L15.6 25.6Z" fill="#c9282d"/><path d="M12.8 12.8L24.1 3.3L32.2 11.4L22.2 23.2Q17 26 13 24Q9.5 19 12.8 12.8Z" fill="#8fb3c6"/><path d="M32.2 11.4L22.2 23.2Q17 26 13 24L14.5 22.5Q19 23.5 22 20.5L30 10Z" fill="#5e8ea3"/><path d="M24.1 3.3L35 0.5L32.2 11.4Z" fill="#d9412e"/><path d="M24.1 3.3Q30 0.8 35 0.5Q33.8 6 32.2 11.4Q29 5.5 24.1 3.3Z" fill="#e04a2c"/><circle cx="22.7" cy="12.8" r="3" fill="#f2f2f2"/><circle cx="22.7" cy="12.8" r="2.1" fill="#3f5866"/><path d="M6.5 28.2L15.5 20.2" stroke="#c9282d" stroke-width="2.8" stroke-linecap="round"/></svg></div>
<div class="d" style="left:449px;top:738px;width:326px;height:23px;"></div>
<div class="t" style="left:449.0px;top:737.8px;font-size:18px;line-height:22px;color:#0f0f23;font-weight:bold;text-align:left;">Quick Start</div>
<div class="d" style="left:449px;top:770px;width:326px;height:45px;"></div>
<div class="t" style="left:449.0px;top:771.8px;font-size:14.4px;line-height:18px;color:#6b7280;font-weight:normal;text-align:left;">Build your first project with our beginner-friendly</div>
<div class="t" style="left:449.0px;top:794.8px;font-size:14.4px;line-height:18px;color:#6b7280;font-weight:normal;text-align:left;">tutorial.</div>
<div style="position:absolute;left:825px;top:646px;width:375px;height:193px;border:1px solid #e5e7eb;border-radius:8px;background:#fff"></div>
<div class="d" style="left:825px;top:646px;width:375px;height:193px;"></div>
<div class="d" style="left:849px;top:671px;width:326px;height:50px;"></div>
<div class="emo" style="left:851px;top:682.5px"><svg width="36" height="26" viewBox="0 0 36 26"><path d="M1 1.5H3V21.5Q11 21 16 22.5H20Q25 21 33 21.5V1.5H35V23.5Q26 22.5 21 24.5H15Q10 22.5 1 23.5Z" fill="#e6372c"/><path d="M2 1.5H3.5V20Q11 19.5 17 21.5H19Q25 19.5 32.5 20V1.5H34V22Q26 21 20.5 23H15.5Q10 21 2 22Z" fill="#8fcce0"/><path d="M3.5 1Q11 0 17.5 1.5V21.5Q11 19.5 3.5 20Z" fill="#fafafa"/><path d="M32.5 1Q25 0 18.5 1.5V21.5Q25 19.5 32.5 20Z" fill="#f3f3f3"/><path d="M16 1.2H20V21.5H16Z" fill="#d9ebf2" opacity=".7"/><g stroke="#8a8f95" stroke-width=".7"><path d="M5.5 3.5H14.5M5.5 5.5H15M5.5 7.5H14M5.5 9.5H15M5.5 11.5H14.5M5.5 13.5H15M5.5 15.5H14M5.5 17.5H15"/><path d="M21 3.5H30.5M21 5.5H30M21 7.5H30.5M21 9.5H30M21 11.5H30.5M21 13.5H30M21 15.5H30.5M21 17.5H30"/></g><path d="M14.5 22.8Q16.3 25.5 18 25.5Q19.7 25.5 21.5 22.8" stroke="#333" stroke-width="1.5" fill="none"/></svg></div>
<div class="d" style="left:849px;top:738px;width:326px;height:23px;"></div>
<div class="t" style="left:849.0px;top:737.8px;font-size:18px;line-height:22px;color:#0f0f23;font-weight:bold;text-align:left;">API Reference</div>
<div class="d" style="left:849px;top:770px;width:326px;height:45px;"></div>
<div class="t" style="left:849.0px;top:771.8px;font-size:14.4px;line-height:18px;color:#6b7280;font-weight:normal;text-align:left;">Complete API documentation with examples and</div>
<div class="t" style="left:849.0px;top:794.8px;font-size:14.4px;line-height:18px;color:#6b7280;font-weight:normal;text-align:left;">type definitions.</div>
<div style="position:absolute;left:25px;top:865px;width:1175px;height:170px;border:1px solid #e5e7eb;border-radius:8px;background:#fff"></div>
<div class="d" style="left:25px;top:865px;width:1175px;height:170px;"></div>
<div class="d" style="left:49px;top:889px;width:1127px;height:50px;"></div>
<div class="emo" style="left:56.5px;top:896px"><svg width="24" height="37" viewBox="0 0 24 37"><path d="M11.5 0.2C5.2 0.2 0.3 5 0.3 11C0.3 15.5 3 18.5 4.5 21.5L4.7 24.5H18.5L18.8 21.5C20.5 18.5 22.8 15.5 22.8 11C22.8 5 17.8 0.2 11.5 0.2Z" fill="#fdd20a"/><ellipse cx="7" cy="7.2" rx="2.6" ry="4.6" fill="#fff87a" transform="rotate(40 7 7.2)"/><path d="M9.5 9.5Q8.8 12.5 9.8 15.8M11.8 9.3Q11 12.5 12 15.8M14.3 9.5Q15 12.5 14 15.8" stroke="#fff" stroke-width=".7" fill="none" opacity=".9"/><path d="M8.2 16Q9.5 17.5 9.5 19V23.5M15.2 16Q14 17.5 14 19V23.5M9.5 19.5H14" stroke="#c98a10" stroke-width="1.1" fill="none"/><path d="M4.5 24.3H18.8L17.8 31.5Q17 35.8 11.6 35.8Q6.3 35.8 5.5 31.5Z" fill="#4f93a8"/><path d="M6.5 26.3H17" stroke="#f2d24a" stroke-width="1.3"/><path d="M6.2 29H17.2M6.6 31.2H16.8" stroke="#8fd0e3" stroke-width=".9"/><path d="M8 35Q11.6 36.8 15.2 35" stroke="#2e4f5c" stroke-width="1.3" fill="none"/></svg></div>
<div class="d" style="left:49px;top:957px;width:1127px;height:22px;"></div>
<div class="t" style="left:49.0px;top:956.3px;font-size:18px;line-height:22px;color:#0f0f23;font-weight:bold;text-align:left;">Examples</div>
<div class="d" style="left:49px;top:989px;width:1127px;height:21px;"></div>
<div class="t" style="left:49.0px;top:990.5px;font-size:14.4px;line-height:18px;color:#6b7280;font-weight:normal;text-align:left;">Real-world examples and code snippets you can copy and adapt.</div>
<div class="d" style="left:1px;top:1px;width:1223px;height:1200px"></div>

</div>
<div id="rpanel">
<div class="a" style="left:1527px;top:40px;width:9px;height:1092px;background:#141414"></div>
<div class="a" style="left:1527px;top:40px;width:9px;height:440px;background:#404040"></div>
<div class="a" style="left:1536px;top:41px;width:512px;height:1121px;background:#1b1b1b"></div>
<div class="a" style="left:1541px;top:47px;width:349px;height:27px;border:1px solid #2b2b2b;border-radius:5px;background:#1b1b1b"></div>
<div class="a" style="left:1641px;top:53px;font-family:'Liberation Mono',monospace;font-size:13.5px;line-height:18px;color:#e8e8e8;white-space:nowrap">.docs-hero__title</div>
<svg class="a" style="left:1876px;top:57px" width="11" height="7" viewBox="0 0 11 7"><path d="M1 1L5.5 5.5L10 1" fill="none" stroke="#e0e0e0" stroke-width="1.6"/></svg>
<div class="a" style="left:1899px;top:52px;font-size:13px;line-height:16px;color:#eee">10</div>
<svg class="a" style="left:1921px;top:51px" width="17" height="17" viewBox="0 0 17 17"><path d="M1.5 3.5L3.5 1.5L15 13L16.5 16.5L13 15Z" fill="#f2b01e"/><path d="M1.5 3.5L3.5 1.5L5 3L3 5Z" fill="#e86a78"/><path d="M3 5L5 3L6.2 4.2L4.2 6.2Z" fill="#7cc3d6"/><path d="M13 15L16.5 16.5L15 13Z" fill="#f3d7a5"/><path d="M4.2 6.2L14 16L15 13L6.2 4.2Z" fill="#e39a12" opacity=".6"/></svg>
<svg class="a" style="left:1951px;top:51px" width="12" height="16" viewBox="0 0 12 16"><rect x="0" y="1.5" width="12" height="14.5" rx="1" fill="#b8733a"/><rect x="1.3" y="3" width="9.4" height="11.7" fill="#d6dade"/><path d="M3.5 0.5H8.5L9.5 3.5H2.5Z" fill="#7aaec2"/></svg>
<svg class="a" style="left:1975px;top:51px" width="16" height="16" viewBox="0 0 16 16"><path d="M0.5 8.5L2 6H14L15.5 8.5V15.5H0.5Z" fill="#e0a163"/><path d="M2.5 7H13.5V10H2.5Z" fill="#5a3424"/><path d="M6.5 0.5H9.5V4H11.5L8 7.5L4.5 4H6.5Z" fill="#e0362c"/></svg>
<svg class="a" style="left:2001px;top:51px" width="16" height="17" viewBox="0 0 16 17"><path d="M15.5 0.5L8 8" stroke="#9a5a2a" stroke-width="1"/><path d="M7 7L10 10L5 16.5L0.5 13Z" fill="#e2b548"/><path d="M7 7L10 10L9 11L6 8Z" fill="#c98f2e"/></svg>
<div class="a" style="left:2032px;top:54px;font-size:11px;line-height:13px;color:#ddd">?</div>
<div class="a" style="left:1536px;top:86px;width:512px;height:40px;background:#121212"></div>
<div class="a" style="left:1544px;top:95px;width:51px;height:22px;background:#1d1d1d;border-radius:4px"></div>
<div class="a" style="left:1548px;top:98px;font-size:12px;line-height:16px;color:#999">#</div>
<div class="a" style="left:1561px;top:98px;font-size:12.5px;line-height:16px;color:#a07a45">iunth</div>
<div class="a" style="left:1604px;top:95px;width:111px;height:22px;background:#232323;border-radius:4px"></div>
<div class="a" style="left:1610px;top:104px;width:3px;height:3px;border-radius:50%;background:#ddd"></div>
<div class="a" style="left:1621px;top:98px;font-size:12.5px;line-height:16px;color:#6fcf8a;letter-spacing:-0.2px">docs-hero__title</div>
<div class="a" style="left:1724px;top:95px;width:23px;height:23px;background:#333;border-radius:2px"></div>
<svg class="a" style="left:1730px;top:101px" width="11" height="11" viewBox="0 0 11 11"><path d="M5.5 0.5V10.5M0.5 5.5H10.5" stroke="#eee" stroke-width="1.5"/></svg>
<svg class="a" style="left:1543px;top:136px" width="9" height="6" viewBox="0 0 9 6"><path d="M0.5 3H7.5M5.5 1.2L7.8 3L5.5 4.8" fill="none" stroke="#ddd" stroke-width="1"/></svg>
<div class="a" style="left:1557px;top:130.5px;font-size:12.5px;line-height:16px;color:#eee;white-space:nowrap;">Pseudo Class</div>
<svg class="a" style="left:1543px;top:160px" width="9" height="6" viewBox="0 0 9 6"><path d="M0.5 3H7.5M5.5 1.2L7.8 3L5.5 4.8" fill="none" stroke="#ddd" stroke-width="1"/></svg>
<div class="a" style="left:1557px;top:154.5px;font-size:12.5px;line-height:16px;color:#eee;white-space:nowrap;">Relation</div>
<div class="a" style="left:1537px;top:183px;width:511px;height:36px;background:#141414;border:1px solid #232323;border-radius:4px"></div>
<div class="a" style="left:1541px;top:193.5px;font-size:12px;line-height:16px;color:#7a7a7a;white-space:nowrap;">Search...</div>
<div class="a" style="left:2018px;top:189px;width:25px;height:25px;border:1px solid #3a3a3a;border-radius:50%"></div>
<div class="a" style="left:2025px;top:194px;font-size:12px;line-height:16px;color:#6a6a6a">x</div>
<div class="a" style="left:1536px;top:219px;width:512px;height:35px;background:#171717;"></div>
<div class="a" style="left:1563px;top:232.0px;width:0;height:0;border-top:4.5px solid transparent;border-bottom:4.5px solid transparent;border-left:5px solid #e0e0e0"></div>
<div class="a" style="left:1578px;top:229.0px;font-size:12px;line-height:16px;color:#e8e8e8;white-space:nowrap;letter-spacing:1.1px">General</div>
<div class="a" style="left:1536px;top:254px;width:512px;height:36px;background:#171717;"></div>
<div class="a" style="left:1563px;top:267.5px;width:0;height:0;border-top:4.5px solid transparent;border-bottom:4.5px solid transparent;border-left:5px solid #e0e0e0"></div>
<div class="a" style="left:1578px;top:264.5px;font-size:12px;line-height:16px;color:#e8e8e8;white-space:nowrap;letter-spacing:1.1px">Dimension</div>
<div class="a" style="left:1653px;top:269.5px;width:7px;height:7px;border:1.5px solid #7b6cf2;border-radius:50%"></div>
<div class="a" style="left:1536px;top:290px;width:512px;height:36px;background:#171717;"></div>
<div class="a" style="left:1561px;top:306.0px;width:0;height:0;border-left:4.5px solid transparent;border-right:4.5px solid transparent;border-top:5px solid #e0e0e0"></div>
<div class="a" style="left:1578px;top:300.5px;font-size:12px;line-height:16px;color:#e8e8e8;white-space:nowrap;letter-spacing:1.1px">Typography</div>
<div class="a" style="left:1660px;top:305.5px;width:7px;height:7px;border:1.5px solid #7b6cf2;border-radius:50%"></div>
<div class="a" style="left:1536px;top:326px;width:512px;height:646px;background:#1c1c1c"></div>
<div class="a" style="left:1546px;top:341.5px;font-size:12.5px;line-height:16px;color:#e6e6e6;white-space:nowrap;">Font family</div>
<div class="a" style="left:1546px;top:360px;width:242px;height:25px;background:#141414;border-radius:4px"></div>
<div class="a" style="left:1551px;top:364.5px;font-size:12.5px;line-height:16px;color:#e6e6e6;white-space:nowrap;">Arial</div>
<div class="a" style="left:1775px;top:370px;width:0;height:0;border-left:4px solid transparent;border-right:4px solid transparent;border-top:4.5px solid #7d7d7d"></div>
<div class="a" style="left:1797px;top:340.5px;font-size:12.5px;line-height:16px;color:#7b6cf2;white-space:nowrap;">Font size</div>
<svg class="a" style="left:1850px;top:343px" width="10" height="10" viewBox="0 0 10 10"><path d="M1 1L9 9M9 1L1 9" stroke="#7b6cf2" stroke-width="1.4"/></svg>
<div class="a" style="left:1797px;top:359px;width:240px;height:25px;background:#121212;border:1px solid #1f1f1f;border-radius:4px"></div>
<div class="a" style="left:1803px;top:363.5px;font-size:12.5px;line-height:16px;color:#e6e6e6;white-space:nowrap;">3</div>
<div class="a" style="left:1993px;top:363.5px;font-size:12px;line-height:16px;color:#e6e6e6;white-space:nowrap;">rem</div>
<div class="a" style="left:2025.5px;top:365px;width:0;height:0;border-left:3.5px solid transparent;border-right:3.5px solid transparent;border-bottom:4px solid #8a8a8a"></div>
<div class="a" style="left:2025.5px;top:373px;width:0;height:0;border-left:3.5px solid transparent;border-right:3.5px solid transparent;border-top:4px solid #8a8a8a"></div>
<div class="a" style="left:1546px;top:393.5px;font-size:12.5px;line-height:16px;color:#e6e6e6;white-space:nowrap;">Font weight</div>
<div class="a" style="left:1546px;top:412px;width:242px;height:25px;background:#141414;border-radius:4px"></div>
<div class="a" style="left:1775px;top:422px;width:0;height:0;border-left:4px solid transparent;border-right:4px solid transparent;border-top:4.5px solid #7d7d7d"></div>
<div class="a" style="left:1797px;top:392.5px;font-size:12.5px;line-height:16px;color:#e6e6e6;white-space:nowrap;">Letter spacing</div>
<div class="a" style="left:1797px;top:411px;width:240px;height:25px;background:#121212;border:1px solid #1f1f1f;border-radius:4px"></div>
<div class="a" style="left:2002px;top:415.5px;font-size:12px;line-height:16px;color:#e6e6e6;white-space:nowrap;">-</div>
<div class="a" style="left:2025.5px;top:417px;width:0;height:0;border-left:3.5px solid transparent;border-right:3.5px solid transparent;border-bottom:4px solid #8a8a8a"></div>
<div class="a" style="left:2025.5px;top:425px;width:0;height:0;border-left:3.5px solid transparent;border-right:3.5px solid transparent;border-top:4px solid #8a8a8a"></div>
<div class="a" style="left:1546px;top:444.5px;font-size:12.5px;line-height:16px;color:#7b6cf2;white-space:nowrap;">Color</div>
<svg class="a" style="left:1580px;top:447px" width="10" height="10" viewBox="0 0 10 10"><path d="M1 1L9 9M9 1L1 9" stroke="#7b6cf2" stroke-width="1.4"/></svg>
<div class="a" style="left:1546px;top:463px;width:491px;height:26px;background:#121212;border:1px solid #1f1f1f;border-radius:4px"></div>
<div class="a" style="left:1551px;top:468.5px;font-size:12.5px;line-height:16px;color:#e6e6e6;white-space:nowrap;">#0f0f23</div>
<div class="a" style="left:2019px;top:465px;width:17px;height:22px;background:#0f0f23;border:1px solid #222"></div>
<div class="a" style="left:1546px;top:497.5px;font-size:12.5px;line-height:16px;color:#e6e6e6;white-space:nowrap;">Line height</div>
<div class="a" style="left:1546px;top:515px;width:241px;height:25px;background:#121212;border:1px solid #1f1f1f;border-radius:4px"></div>
<div class="a" style="left:1752px;top:520.5px;font-size:12px;line-height:16px;color:#e6e6e6;white-space:nowrap;">-</div>
<div class="a" style="left:1774.5px;top:521px;width:0;height:0;border-left:3.5px solid transparent;border-right:3.5px solid transparent;border-bottom:4px solid #8a8a8a"></div>
<div class="a" style="left:1774.5px;top:529px;width:0;height:0;border-left:3.5px solid transparent;border-right:3.5px solid transparent;border-top:4px solid #8a8a8a"></div>
<div class="a" style="left:1797px;top:498.5px;font-size:12.5px;line-height:16px;color:#e6e6e6;white-space:nowrap;">Text align</div>
<div class="a" style="left:1797px;top:516px;width:240px;height:25px;background:#141414;border-radius:4px"></div>
<div class="a" style="left:2024px;top:526px;width:0;height:0;border-left:4px solid transparent;border-right:4px solid transparent;border-top:4.5px solid #7d7d7d"></div>
<div class="a" style="left:1546px;top:550.5px;font-size:12.5px;line-height:16px;color:#e6e6e6;white-space:nowrap;">Word break</div>
<div class="a" style="left:1620px;top:553px;font-size:9.5px;line-height:14px;color:#ddd">?</div>
<div class="a" style="left:1546px;top:567px;width:241px;height:25px;background:#141414;border-radius:4px"></div>
<div class="a" style="left:1775px;top:577px;width:0;height:0;border-left:4px solid transparent;border-right:4px solid transparent;border-top:4.5px solid #7d7d7d"></div>
<div class="a" style="left:1797px;top:550.5px;font-size:12.5px;line-height:16px;color:#e6e6e6;white-space:nowrap;">Word wrap</div>
<div class="a" style="left:1867px;top:553px;font-size:9.5px;line-height:14px;color:#ddd">?</div>
<div class="a" style="left:1797px;top:567px;width:240px;height:25px;background:#141414;border-radius:4px"></div>
<div class="a" style="left:2024px;top:577px;width:0;height:0;border-left:4px solid transparent;border-right:4px solid transparent;border-top:4.5px solid #7d7d7d"></div>
<div class="a" style="left:1546px;top:600.5px;font-size:12.5px;line-height:16px;color:#e6e6e6;white-space:nowrap;">White space</div>
<div class="a" style="left:1623px;top:603px;font-size:9.5px;line-height:14px;color:#ddd">?</div>
<div class="a" style="left:1546px;top:617px;width:241px;height:25px;background:#141414;border-radius:4px"></div>
<div class="a" style="left:1775px;top:627px;width:0;height:0;border-left:4px solid transparent;border-right:4px solid transparent;border-top:4.5px solid #7d7d7d"></div>
<div class="a" style="left:1546px;top:650.5px;font-size:12.5px;line-height:16px;color:#e6e6e6;white-space:nowrap;">Text decoration</div>
<div class="a" style="left:1546px;top:668px;width:491px;height:177px;background:#181818;border-radius:4px"></div>
<div class="a" style="left:1557px;top:683.5px;font-size:12.5px;line-height:16px;color:#e6e6e6;white-space:nowrap;">Text decoration line</div>
<div class="a" style="left:1676px;top:686px;font-size:9.5px;line-height:14px;color:#ddd">?</div>
<div class="a" style="left:1557px;top:701px;width:230px;height:24px;background:#131313;border-radius:4px"></div>
<div class="a" style="left:1775px;top:711px;width:0;height:0;border-left:4px solid transparent;border-right:4px solid transparent;border-top:4.5px solid #7d7d7d"></div>
<div class="a" style="left:1797px;top:683.5px;font-size:12.5px;line-height:16px;color:#e6e6e6;white-space:nowrap;">Text decoration style</div>
<div class="a" style="left:1922px;top:686px;font-size:9.5px;line-height:14px;color:#ddd">?</div>
<div class="a" style="left:1797px;top:701px;width:230px;height:24px;background:#131313;border-radius:4px"></div>
<div class="a" style="left:2014px;top:711px;width:0;height:0;border-left:4px solid transparent;border-right:4px solid transparent;border-top:4.5px solid #7d7d7d"></div>
<div class="a" style="left:1557px;top:733.5px;font-size:12.5px;line-height:16px;color:#e6e6e6;white-space:nowrap;">Text decoration color</div>
<div class="a" style="left:1684px;top:737px;font-size:9.5px;line-height:14px;color:#ddd">?</div>
<div class="a" style="left:1557px;top:752px;width:470px;height:25px;background:#121212;border:1px solid #232323;border-radius:4px"></div>
<div class="a" style="left:2007px;top:755px;width:19px;height:20px;background:#e8e8e8"></div>
<div class="a" style="left:1557px;top:785.5px;font-size:12.5px;line-height:16px;color:#e6e6e6;white-space:nowrap;">Text decoration thickness</div>
<div class="a" style="left:1707px;top:789px;font-size:9.5px;line-height:14px;color:#ddd">?</div>
<div class="a" style="left:1557px;top:804px;width:230px;height:26px;background:#121212;border:1px solid #232323;border-radius:4px"></div>
<div class="a" style="left:1761px;top:809.5px;font-size:12px;line-height:16px;color:#e6e6e6;white-space:nowrap;">-</div>
<div class="a" style="left:1774.5px;top:811px;width:0;height:0;border-left:3.5px solid transparent;border-right:3.5px solid transparent;border-bottom:4px solid #8a8a8a"></div>
<div class="a" style="left:1774.5px;top:819px;width:0;height:0;border-left:3.5px solid transparent;border-right:3.5px solid transparent;border-top:4px solid #8a8a8a"></div>
<div class="a" style="left:1546px;top:853.5px;font-size:12.5px;line-height:16px;color:#e6e6e6;white-space:nowrap;">Text transform</div>
<div class="a" style="left:1639px;top:857px;font-size:9.5px;line-height:14px;color:#ddd">?</div>
<div class="a" style="left:1546px;top:873px;width:241px;height:23px;background:#141414;border-radius:4px"></div>
<div class="a" style="left:1775px;top:882px;width:0;height:0;border-left:4px solid transparent;border-right:4px solid transparent;border-top:4.5px solid #7d7d7d"></div>
<div class="a" style="left:1797px;top:853.5px;font-size:12.5px;line-height:16px;color:#e6e6e6;white-space:nowrap;">Text overflow</div>
<div class="a" style="left:1883px;top:857px;font-size:9.5px;line-height:14px;color:#ddd">?</div>
<div class="a" style="left:1797px;top:873px;width:240px;height:23px;background:#141414;border-radius:4px"></div>
<div class="a" style="left:2025px;top:882px;width:0;height:0;border-left:4px solid transparent;border-right:4px solid transparent;border-top:4.5px solid #7d7d7d"></div>
<div class="a" style="left:1546px;top:905.5px;font-size:12.5px;line-height:16px;color:#e6e6e6;white-space:nowrap;">Text shadow</div>
<svg class="a" style="left:2022px;top:909px" width="12" height="12" viewBox="0 0 12 12"><path d="M6 0.5V11.5M0.5 6H11.5" stroke="#e6e6e6" stroke-width="1.4"/></svg>
<div class="a" style="left:1546px;top:928px;width:492px;height:30px;background:#121212;border-radius:3px"></div>
<div class="a" style="left:1536px;top:972px;width:512px;height:36px;background:#171717;"></div>
<div class="a" style="left:1563px;top:985.5px;width:0;height:0;border-top:4.5px solid transparent;border-bottom:4.5px solid transparent;border-left:5px solid #e0e0e0"></div>
<div class="a" style="left:1578px;top:982.5px;font-size:12px;line-height:16px;color:#e8e8e8;white-space:nowrap;letter-spacing:1.1px">Decorations</div>
<div class="a" style="left:1536px;top:1008px;width:512px;height:37px;background:#171717;"></div>
<div class="a" style="left:1563px;top:1022.0px;width:0;height:0;border-top:4.5px solid transparent;border-bottom:4.5px solid transparent;border-left:5px solid #e0e0e0"></div>
<div class="a" style="left:1578px;top:1019.0px;font-size:12px;line-height:16px;color:#e8e8e8;white-space:nowrap;letter-spacing:1.1px">Extra</div>
<div class="a" style="left:1536px;top:1045px;width:512px;height:117px;background:#1c1c1c"></div>

</div>
<div id="status">

  <div class="a" style="left:14px;top:7px;font-size:12px;line-height:16px;color:#a8a8a8">Selection:</div>
  <div class="a" style="left:75px;top:6px;font-size:14px;line-height:16px;color:#b8b8b8">Body</div>
  <div class="a" style="left:143px;top:6px;font-size:14px;line-height:16px;color:#b8b8b8">Main</div>
  <div class="a" style="left:209px;top:6px;font-size:14px;line-height:16px;color:#b8b8b8">Section</div>
  <div class="a" style="left:291px;top:6px;font-size:14px;line-height:16px;color:#b8b8b8">Div</div>
  <div class="a" style="left:347px;top:6px;font-size:14px;line-height:16px;color:#b8b8b8">Text</div>
  <svg class="a" style="left:119px;top:8px" width="13" height="12" viewBox="0 0 13 12"><path d="M1 6H10.5M6.5 1.8L10.8 6L6.5 10.2" fill="none" stroke="#b5b5b5" stroke-width="2.4" stroke-linecap="round" stroke-linejoin="round"/></svg>
  <svg class="a" style="left:185px;top:8px" width="13" height="12" viewBox="0 0 13 12"><path d="M1 6H10.5M6.5 1.8L10.8 6L6.5 10.2" fill="none" stroke="#b5b5b5" stroke-width="2.4" stroke-linecap="round" stroke-linejoin="round"/></svg>
  <svg class="a" style="left:267px;top:8px" width="13" height="12" viewBox="0 0 13 12"><path d="M1 6H10.5M6.5 1.8L10.8 6L6.5 10.2" fill="none" stroke="#b5b5b5" stroke-width="2.4" stroke-linecap="round" stroke-linejoin="round"/></svg>
  <svg class="a" style="left:323px;top:8px" width="13" height="12" viewBox="0 0 13 12"><path d="M1 6H10.5M6.5 1.8L10.8 6L6.5 10.2" fill="none" stroke="#b5b5b5" stroke-width="2.4" stroke-linecap="round" stroke-linejoin="round"/></svg>
</div>
</body></html>
